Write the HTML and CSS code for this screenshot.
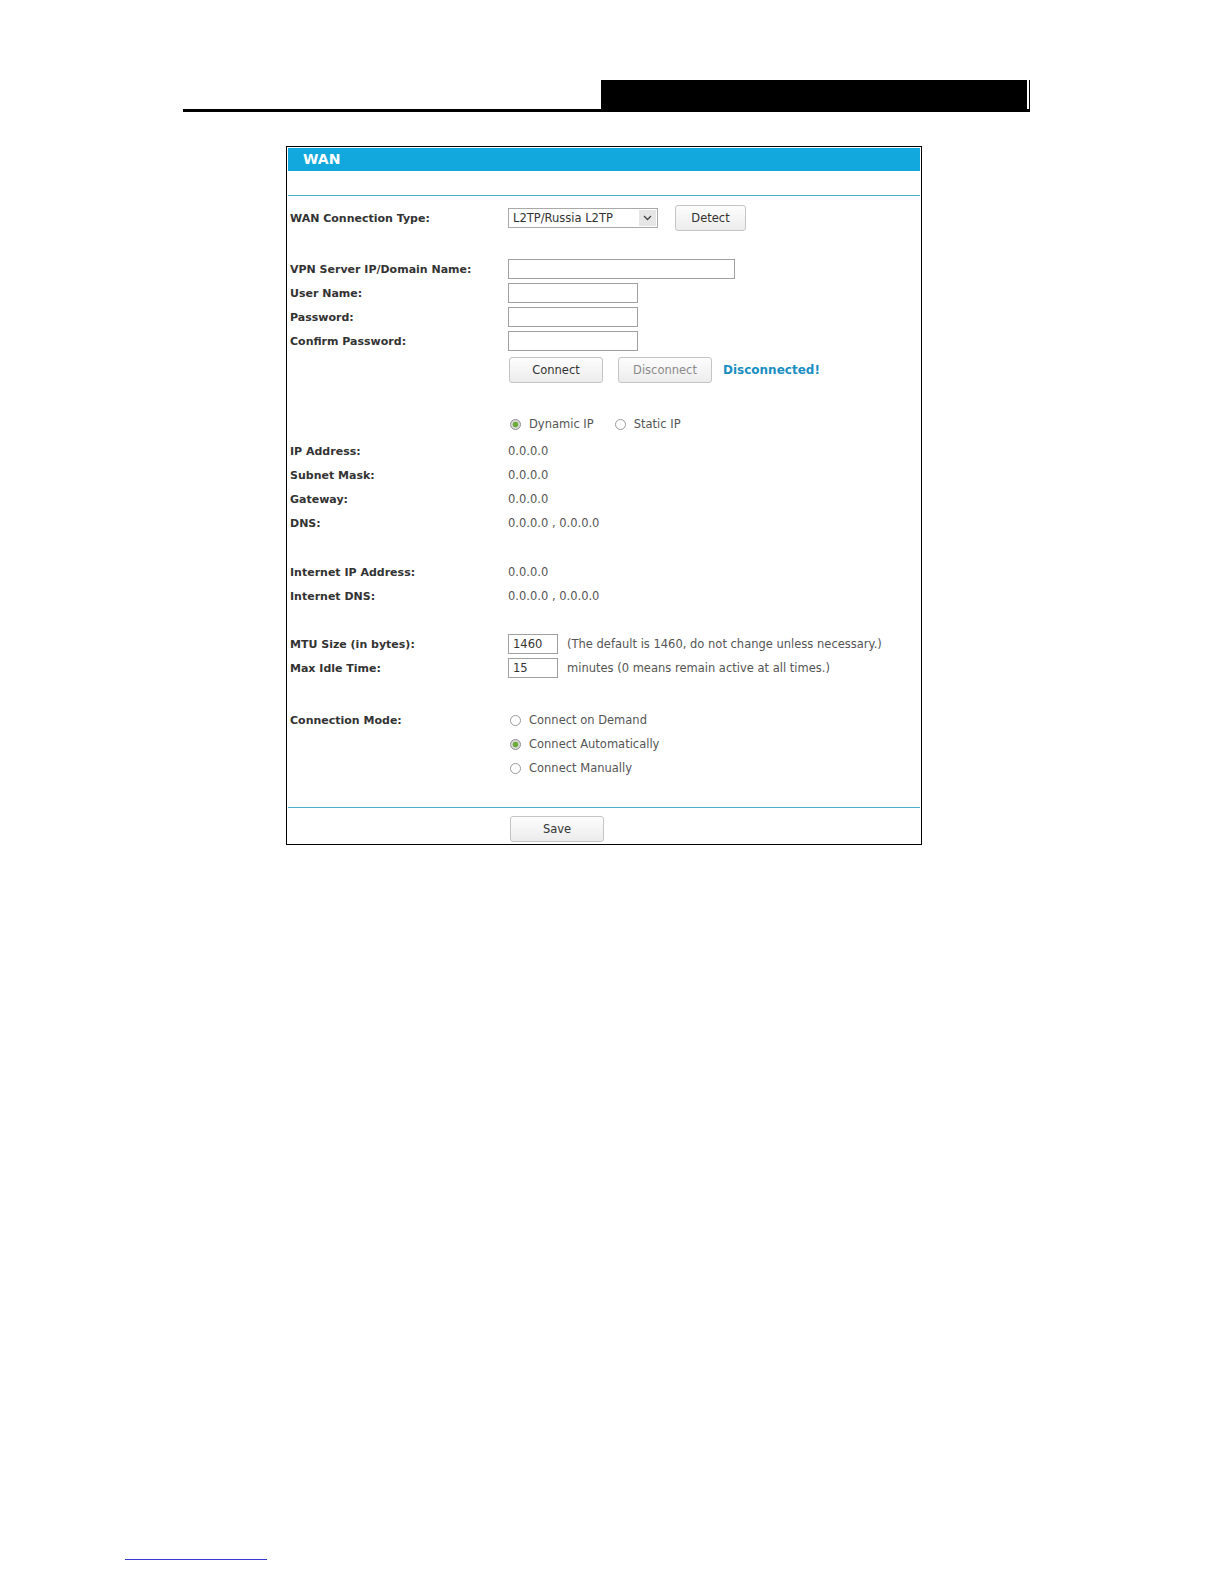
FILE: index.html
```html
<!DOCTYPE html>
<html lang="en">
<head>
  <meta charset="UTF-8">
  <title>WAN</title>
  <link rel="stylesheet" href="styles.css">
</head>
<body>

<div class="doc-header">
  <div class="doc-tab"></div>
</div>

<div class="panel">
  <div class="panel-head">
    <div class="panel-title">WAN</div>
  </div>

  <div class="form">
    <div class="row row-type">
      <div class="label">WAN Connection Type:</div>
      <div class="value">
        <div class="select">
          <span class="select-text">L2TP/Russia L2TP</span>
          <span class="select-arrow">
            <svg width="9" height="6" viewBox="0 0 9 6"><path d="M1 1 L4.5 4.5 L8 1" fill="none" stroke="#444" stroke-width="1.3"/></svg>
          </span>
        </div>
        <span class="btn btn-detect">Detect</span>
      </div>
    </div>

    <div class="row gap-26">
      <div class="label">VPN Server IP/Domain Name:</div>
      <div class="value"><span class="input input-wide"></span></div>
    </div>
    <div class="row">
      <div class="label">User Name:</div>
      <div class="value"><span class="input input-mid"></span></div>
    </div>
    <div class="row">
      <div class="label">Password:</div>
      <div class="value"><span class="input input-mid"></span></div>
    </div>
    <div class="row">
      <div class="label">Confirm Password:</div>
      <div class="value"><span class="input input-mid"></span></div>
    </div>
    <div class="row row-buttons">
      <div class="label"></div>
      <div class="value">
        <span class="btn">Connect</span>
        <span class="btn btn-off">Disconnect</span>
        <span class="status">Disconnected!</span>
      </div>
    </div>

    <div class="row gap-29">
      <div class="label"></div>
      <div class="value">
        <span class="radio on"></span><span class="radio-text">Dynamic IP</span>
        <span class="radio"></span><span class="radio-text">Static IP</span>
      </div>
    </div>
    <div class="row gap-3">
      <div class="label">IP Address:</div>
      <div class="value">0.0.0.0</div>
    </div>
    <div class="row">
      <div class="label">Subnet Mask:</div>
      <div class="value">0.0.0.0</div>
    </div>
    <div class="row">
      <div class="label">Gateway:</div>
      <div class="value">0.0.0.0</div>
    </div>
    <div class="row">
      <div class="label">DNS:</div>
      <div class="value">0.0.0.0 , 0.0.0.0</div>
    </div>

    <div class="row gap-25">
      <div class="label">Internet IP Address:</div>
      <div class="value">0.0.0.0</div>
    </div>
    <div class="row">
      <div class="label">Internet DNS:</div>
      <div class="value">0.0.0.0 , 0.0.0.0</div>
    </div>

    <div class="row gap-24">
      <div class="label">MTU Size (in bytes):</div>
      <div class="value"><span class="input input-small">1460</span><span class="note">(The default is 1460, do not change unless necessary.)</span></div>
    </div>
    <div class="row">
      <div class="label">Max Idle Time:</div>
      <div class="value"><span class="input input-small">15</span><span class="note">minutes (0 means remain active at all times.)</span></div>
    </div>

    <div class="row gap-28">
      <div class="label">Connection Mode:</div>
      <div class="value"><span class="radio"></span><span class="radio-text">Connect on Demand</span></div>
    </div>
    <div class="row">
      <div class="label"></div>
      <div class="value"><span class="radio on"></span><span class="radio-text">Connect Automatically</span></div>
    </div>
    <div class="row">
      <div class="label"></div>
      <div class="value"><span class="radio"></span><span class="radio-text">Connect Manually</span></div>
    </div>
  </div>

  <div class="panel-foot">
    <span class="btn">Save</span>
  </div>
</div>

<div class="page-foot"></div>

</body>
</html>
```

FILE: styles.css
```css
body {
  margin: 0;
  padding: 0;
  background-color: #fff;
  font-family: "DejaVu Sans", Verdana, sans-serif;
  color: #333;
}

/* document header rule */
.doc-header {
  display: flex;
  justify-content: flex-end;
  width: 846px;
  margin: 80px 0 0 183px;
  border-bottom: 3px solid #000;
  border-right: 1px solid #000;
}

.doc-tab {
  width: 426px;
  height: 29px;
  margin-right: 2px;
  background-color: #000;
}

/* panel */
.panel {
  width: 632px;
  margin: 34px 0 0 286px;
  border: 1px solid #000;
  padding: 1px;
}

.panel-head {
  padding-bottom: 24px;
  border-bottom: 1px solid #4aaec8;
}

.panel-title {
  height: 23px;
  line-height: 23px;
  padding-left: 15px;
  background-color: #12a8dd;
  color: #fff;
  font-weight: bold;
  font-size: 14px;
}

.form {
  padding: 9px 0 27px 2px;
}

.row {
  display: flex;
  align-items: center;
  height: 24px;
}

.row-type,
.row-buttons {
  height: 26px;
}

.row-buttons {
  margin-top: 4px;
}

.gap-3 { margin-top: 3px; }
.gap-24 { margin-top: 24px; }
.gap-25 { margin-top: 25px; }
.gap-26 { margin-top: 26px; }
.gap-28 { margin-top: 28px; }
.gap-29 { margin-top: 29px; }

.label {
  width: 218px;
  flex-shrink: 0;
  font-size: 11px;
  font-weight: bold;
  color: #333;
}

.value {
  display: flex;
  align-items: center;
  font-size: 11.5px;
  color: #555;
}

/* controls */
.select {
  display: flex;
  align-items: center;
  justify-content: space-between;
  width: 148px;
  height: 18px;
  border: 1px solid #a9a9a9;
  background-color: #fff;
}

.select-text {
  padding-left: 4px;
  color: #333;
}

.select-arrow {
  display: flex;
  align-items: center;
  justify-content: center;
  width: 17px;
  height: 16px;
  margin-right: 1px;
  background-color: #e6e6e6;
}

.input {
  display: inline-block;
  box-sizing: border-box;
  height: 20px;
  line-height: 18px;
  padding-left: 4px;
  border: 1px solid #a0a0a0;
  background-color: #fff;
  color: #333;
}

.input-wide { width: 227px; }
.input-mid { width: 130px; }
.input-small { width: 50px; }

.note {
  margin-left: 9px;
}

.btn {
  display: inline-block;
  box-sizing: border-box;
  width: 94px;
  height: 26px;
  line-height: 24px;
  margin-left: 1px;
  border: 1px solid #c4c4c4;
  border-radius: 3px;
  background: linear-gradient(#fdfdfd, #ececec);
  text-align: center;
  font-size: 11.5px;
  color: #333;
}

.btn-detect {
  width: 71px;
  margin-left: 17px;
}

.btn-off {
  margin-left: 15px;
  color: #8a8a8a;
}

.status {
  margin-left: 11px;
  font-size: 12px;
  font-weight: bold;
  color: #1a8ec4;
}

.radio {
  display: inline-block;
  box-sizing: border-box;
  width: 11px;
  height: 11px;
  margin-left: 2px;
  border: 1px solid #9a9a9a;
  border-radius: 50%;
  background-color: #fff;
}

.radio.on {
  border-color: #8d8d8d;
  background: radial-gradient(circle, #6cab3a 0 2.6px, #dcdcdc 3.2px);
}

.radio-text {
  margin-left: 8px;
  margin-right: 19px;
}

.panel-foot {
  padding: 8px 0 1px 221px;
  border-top: 1px solid #4aaec8;
}

.panel-foot .btn {
  display: block;
}

.page-foot {
  width: 142px;
  margin: 714px 0 0 125px;
  border-top: 1px solid #3a3ad0;
}
```
